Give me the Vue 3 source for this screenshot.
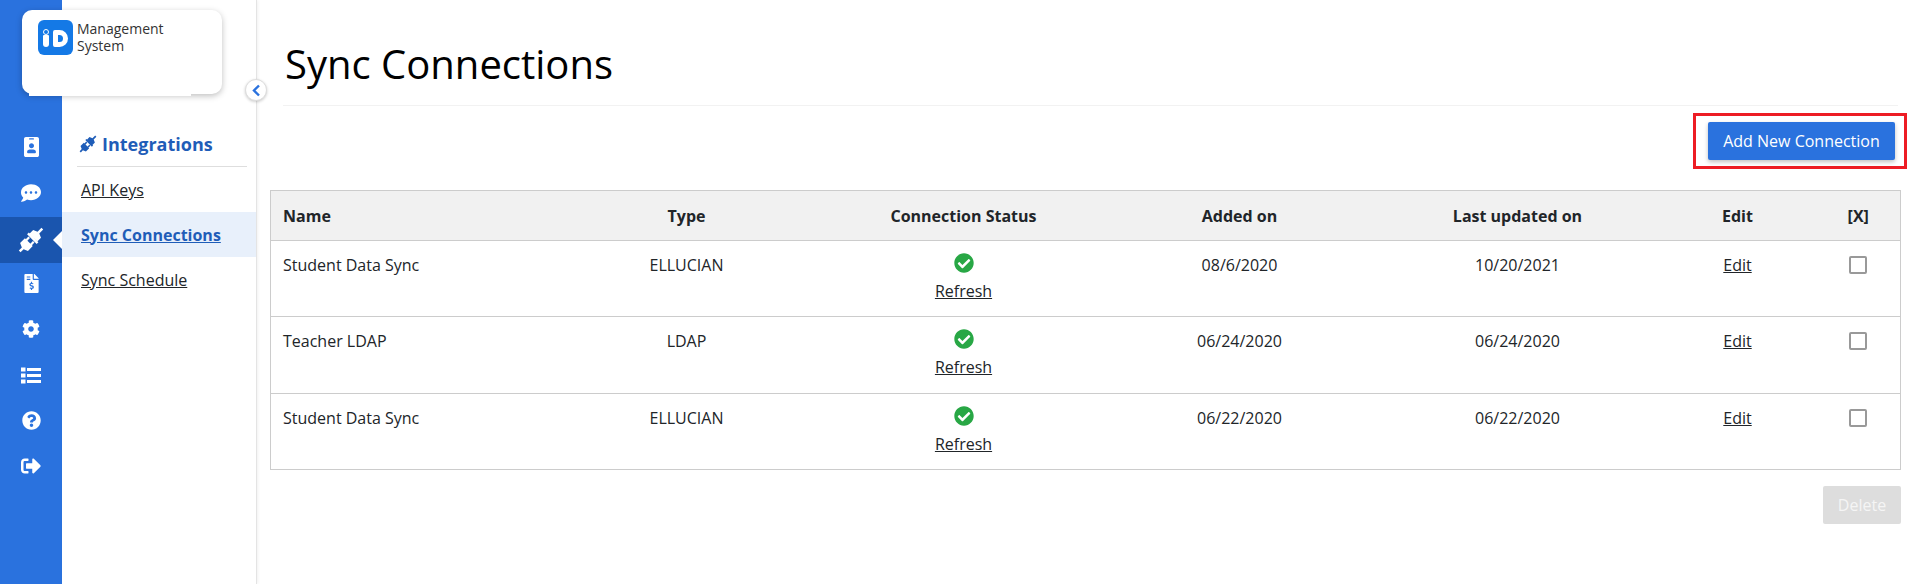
<script setup>
const railItems = [
  { name: 'badge', w: 17, h: 20, box: '0 0 384 512', d: 'M336 0H48C21.5 0 0 21.5 0 48v416c0 26.5 21.5 48 48 48h288c26.5 0 48-21.5 48-48V48c0-26.500-21.500-48-48-48zM144 32h96c8.800 0 16 7.200 16 16s-7.200 16-16 16h-96c-8.800 0-16-7.200-16-16s7.200-16 16-16zm48 128c35.300 0 64 28.700 64 64s-28.700 64-64 64-64-28.700-64-64 28.700-64 64-64zm112 236c0 10.600-10 19-22.400 19H102.400C90 415 80 406.600 80 396v-19c0-31.500 30.100-57 67.200-57h89.600c37.100 0 67.200 25.500 67.200 57z' },
  { name: 'chat', w: 20, h: 20, box: '0 0 512 512', shift: 1, d: 'M256 32C114.600 32 0 125.100 0 240c0 49.600 21.400 95 57 130.700C44.500 421.100 2.700 466 2.200 466.500c-2.200 2.300-2.800 5.700-1.500 8.700S4.800 480 8 480c66.300 0 116-31.800 146.600-56.800 33 12.900 65.600 16.800 101.400 16.800 141.400 0 256-93.100 256-208S397.400 32 256 32zM128 272c-17.700 0-32-14.300-32-32s14.300-32 32-32 32 14.300 32 32-14.300 32-32 32zm128 0c-17.700 0-32-14.300-32-32s14.300-32 32-32 32 14.300 32 32-14.300 32-32 32zm128 0c-17.700 0-32-14.300-32-32s14.300-32 32-32 32 14.300 32 32-14.300 32-32 32z' },
  { name: 'plug', active: true },
  { name: 'invoice', w: 15, h: 19, box: '0 0 384 512', d: 'M377 105L279 7c-4.500-4.500-10.600-7-17-7h-6v128h128v-6.100c0-6.300-2.500-12.400-7-16.900zM224 136V0H24C10.700 0 0 10.700 0 24v464c0 13.300 10.700 24 24 24h336c13.300 0 24-10.700 24-24V160H248c-13.200 0-24-10.800-24-24zM64 72c0-4.400 3.600-8 8-8h80c4.400 0 8 3.600 8 8v16c0 4.400-3.600 8-8 8H72c-4.400 0-8-3.600-8-8zm0 64c0-4.400 3.600-8 8-8h80c4.400 0 8 3.600 8 8v16c0 4.400-3.600 8-8 8H72c-4.400 0-8-3.600-8-8zm144 263.900V424c0 4.400-3.600 8-8 8h-16c-4.400 0-8-3.600-8-8v-24.300c-11.300-.6-22.300-4.500-31.400-11.400-3.900-2.900-4.100-8.800-.6-12.200l11.800-11.200c2.800-2.600 6.900-2.800 10.100-.8 3.900 2.400 8.300 3.700 12.800 3.700h28.100c6.500 0 11.800-5.900 11.800-13.200 0-6-3.600-11.200-8.800-12.800l-45-13.500c-18.600-5.600-31.600-23.400-31.600-43.400 0-24.500 19.100-44.400 42.700-45.100V216c0-4.400 3.600-8 8-8h16c4.400 0 8 3.600 8 8v24.300c11.300.6 22.300 4.500 31.400 11.400 3.900 2.900 4.100 8.800.6 12.200L232.600 275c-2.800 2.600-6.900 2.800-10.100.8-3.900-2.400-8.300-3.700-12.800-3.700h-28.100c-6.500 0-11.800 5.900-11.800 13.200 0 6 3.600 11.200 8.800 12.800l45 13.500c18.600 5.600 31.600 23.400 31.600 43.400 0 24.500-19 44.400-42.700 44.900z' },
  { name: 'cog', w: 18, h: 18, box: '0 0 512 512', d: 'M487.400 315.700l-42.600-24.600c4.300-23.200 4.300-47 0-70.200l42.600-24.600c4.900-2.800 7.100-8.600 5.500-14-11.100-35.600-30-67.800-54.700-94.600-3.800-4.100-10-5.100-14.800-2.300L380.800 110c-17.900-15.400-38.500-27.300-60.800-35.100V25.800c0-5.600-3.900-10.500-9.400-11.700-36.700-8.200-74.300-7.800-109.200 0-5.500 1.200-9.400 6.100-9.400 11.700V75c-22.200 7.900-42.800 19.800-60.800 35.100L88.700 85.500c-4.900-2.800-11-1.900-14.800 2.300-24.700 26.700-43.600 58.900-54.700 94.600-1.700 5.400.6 11.200 5.500 14L67.300 221c-4.300 23.200-4.300 47 0 70.200l-42.600 24.600c-4.900 2.800-7.100 8.600-5.500 14 11.100 35.600 30 67.800 54.700 94.600 3.800 4.100 10 5.100 14.800 2.300l42.600-24.600c17.900 15.400 38.500 27.300 60.800 35.100v49.200c0 5.600 3.900 10.500 9.400 11.700 36.700 8.200 74.300 7.800 109.200 0 5.500-1.200 9.400-6.100 9.400-11.700v-49.200c22.200-7.900 42.800-19.800 60.800-35.100l42.600 24.600c4.900 2.800 11 1.900 14.800-2.300 24.700-26.700 43.600-58.900 54.700-94.600 1.500-5.500-.7-11.300-5.600-14.100zM256 336c-44.100 0-80-35.900-80-80s35.900-80 80-80 80 35.900 80 80-35.900 80-80 80z' },
  { name: 'list', w: 20, h: 17, box: '0 0 20 17', shift: 1, d: 'M0 .5h4.500v4H0zM6 1h14v3H6zM0 6.500h4.500v4H0zM6 7h14v3H6zM0 12.500h4.500v4H0zM6 13h14v3H6z' },
  { name: 'help', w: 19, h: 19, box: '0 0 512 512', d: 'M504 256c0 136.997-111.043 248-248 248S8 392.997 8 256C8 119.083 119.043 8 256 8s248 111.083 248 248zM262.655 90c-54.497 0-89.255 22.957-116.549 63.758-3.536 5.286-2.353 12.415 2.715 16.258l34.699 26.310c5.205 3.947 12.621 3.008 16.665-2.122 17.864-22.658 30.113-35.797 57.303-35.797 20.429 0 45.698 13.148 45.698 32.958 0 14.976-12.363 22.667-32.534 33.976C247.128 238.528 216 254.941 216 296v4c0 6.627 5.373 12 12 12h56c6.627 0 12-5.373 12-12v-1.333c0-28.462 83.186-29.647 83.186-106.667 0-58.002-60.165-102-116.531-102zM256 338c-25.365 0-46 20.635-46 46 0 25.364 20.635 46 46 46s46-20.636 46-46c0-25.365-20.635-46-46-46z' },
  { name: 'logout', w: 20, h: 20, box: '0 0 512 512', d: 'M497 273L329 441c-15 15-41 4.500-41-17v-96H152c-13.300 0-24-10.700-24-24v-96c0-13.300 10.700-24 24-24h136V88c0-21.400 25.900-32 41-17l168 168c9.300 9.400 9.300 24.600 0 34zM192 436v-40c0-6.600-5.400-12-12-12H96c-17.700 0-32-14.300-32-32V160c0-17.700 14.300-32 32-32h84c6.600 0 12-5.400 12-12V76c0-6.600-5.400-12-12-12H96c-53 0-96 43-96 96v192c0 53 43 96 96 96h84c6.600 0 12-5.400 12-12z' }
]

const plugPath = 'M0 12h3.500l1.500-3.500h5.500v9H5L3.500 14H0zM10.500 9.500h3v1.800h-3zM10.500 14.700h3v1.800h-3zM14 7.500h2v11h-2zM16 8.500h4l1.500 3.500H26v2h-4.500L20 17.500h-4z'

const subLinks = [
  { label: 'API Keys' },
  { label: 'Sync Connections', active: true },
  { label: 'Sync Schedule' }
]

const connections = [
  { name: 'Student Data Sync', type: 'ELLUCIAN', added: '08/6/2020', updated: '10/20/2021' },
  { name: 'Teacher LDAP', type: 'LDAP', added: '06/24/2020', updated: '06/24/2020' },
  { name: 'Student Data Sync', type: 'ELLUCIAN', added: '06/22/2020', updated: '06/22/2020' }
]
</script>

<template>
  <div class="page">
    <aside class="rail">
      <div
        v-for="item in railItems"
        :key="item.name"
        class="rail-item"
        :class="{ active: item.active, nudge: item.shift }"
      >
        <svg v-if="item.name === 'plug'" width="32" height="32" viewBox="0 0 26 26">
          <path :d="plugPath" fill="#fff" transform="rotate(-45 13 13)" />
        </svg>
        <svg v-else :width="item.w" :height="item.h" :viewBox="item.box" fill="#fff">
          <path :d="item.d" fill-rule="evenodd" />
        </svg>
      </div>
    </aside>

    <nav class="subnav">
      <h2 class="subnav-title">
        <svg width="22" height="22" viewBox="0 0 26 26">
          <path :d="plugPath" fill="#1f5db8" transform="rotate(-45 13 13)" />
        </svg>
        Integrations
      </h2>
      <a
        v-for="link in subLinks"
        :key="link.label"
        class="subnav-link"
        :class="{ active: link.active }"
        href="#"
      >{{ link.label }}</a>
    </nav>

    <div class="logo-card">
      <div class="logo-mark">
        <span class="logo-i"></span>
        <span class="logo-d"></span>
      </div>
      <div class="logo-text">Management<br />System</div>
    </div>

    <button class="collapse" type="button" aria-label="Collapse">
      <svg width="10" height="13" viewBox="0 0 10 13" fill="none">
        <path d="M8 1.500 3 6.500l5 5" stroke="#2a72de" stroke-width="2.400" />
      </svg>
    </button>

    <main class="main">
      <h1 class="title">Sync Connections</h1>

      <div class="actions">
        <div class="highlight">
          <button class="btn-primary" type="button">Add New Connection</button>
        </div>
      </div>

      <table class="grid">
        <colgroup>
          <col style="width: 282px" />
          <col style="width: 268px" />
          <col style="width: 286px" />
          <col style="width: 266px" />
          <col style="width: 290px" />
          <col style="width: 150px" />
          <col />
        </colgroup>
        <thead>
          <tr>
            <th class="left">Name</th>
            <th>Type</th>
            <th>Connection Status</th>
            <th>Added on</th>
            <th>Last updated on</th>
            <th>Edit</th>
            <th class="pick">[X]</th>
          </tr>
        </thead>
        <tbody>
          <tr v-for="(row, i) in connections" :key="i">
            <td class="left">{{ row.name }}</td>
            <td>{{ row.type }}</td>
            <td class="status">
              <svg class="check" width="20" height="20" viewBox="0 0 512 512" fill="#28a745">
                <path d="M504 256c0 136.967-111.033 248-248 248S8 392.967 8 256 119.033 8 256 8s248 111.033 248 248zM227.314 387.314l184-184c6.248-6.248 6.248-16.379 0-22.627l-22.627-22.627c-6.248-6.249-16.379-6.249-22.628 0L216 308.118l-70.059-70.059c-6.248-6.248-16.379-6.248-22.628 0l-22.627 22.627c-6.248 6.248-6.248 16.379 0 22.627l104 104c6.249 6.250 16.379 6.250 22.628.001z" />
              </svg>
              <a href="#">Refresh</a>
            </td>
            <td>{{ row.added }}</td>
            <td>{{ row.updated }}</td>
            <td><a href="#">Edit</a></td>
            <td class="pick"><span class="box"></span></td>
          </tr>
        </tbody>
      </table>

      <div class="footer">
        <button class="btn-delete" type="button" disabled>Delete</button>
      </div>
    </main>
  </div>
</template>

<style>
html,
body {
  margin: 0;
  background: #fff;
}
</style>

<style scoped>
.page {
  position: relative;
  display: flex;
  height: 584px;
  overflow: hidden;
  font-family: "Open Sans", "Liberation Sans", sans-serif;
  font-size: 16px;
  color: #212529;
}

.rail {
  flex: 0 0 62px;
  box-sizing: border-box;
  padding-top: 124px;
  background: #2a72de;
}

.rail-item {
  position: relative;
  display: flex;
  align-items: center;
  justify-content: center;
  height: 45.5px;
}

.rail-item.nudge svg {
  margin-top: 2px;
}

.rail-item.active {
  height: 46px;
  margin-top: 2px;
  background: #1a55ae;
}

.rail-item.active + .rail-item {
  margin-top: -2px;
}

.rail-item.active::after {
  content: '';
  position: absolute;
  right: 0;
  top: 14px;
  border: 9px solid transparent;
  border-left: 0;
  border-right-color: #fff;
}

.subnav {
  flex: 0 0 195px;
  box-sizing: border-box;
  padding-top: 128px;
  border-right: 1px solid #e4e4e4;
  box-shadow: 1px 0 3px rgba(0, 0, 0, 0.06);
}

.subnav-title {
  display: flex;
  align-items: center;
  gap: 3px;
  margin: 0 9px 0 15px;
  padding-bottom: 6px;
  border-bottom: 1px solid #dedede;
  font-size: 18px;
  line-height: 32px;
  font-weight: 700;
  color: #1f5db8;
}

.subnav-link {
  display: flex;
  align-items: center;
  height: 45px;
  padding-left: 19px;
  color: #212529;
  text-decoration: underline;
}

.subnav-link.active {
  font-weight: 700;
  color: #1f5db8;
  background: #e8f0fb;
}

.logo-card {
  position: absolute;
  left: 22px;
  top: 10px;
  display: flex;
  gap: 4px;
  box-sizing: border-box;
  width: 200px;
  height: 84px;
  padding: 10px 16px;
  background: #fff;
  border-radius: 10px;
  box-shadow: 0 2px 6px rgba(0, 0, 0, 0.25);
}

.logo-card::after {
  content: '';
  position: absolute;
  left: 7px;
  top: 82px;
  width: 162px;
  height: 4px;
  background: #fff;
}

.logo-mark {
  position: relative;
  flex: 0 0 35px;
  height: 35px;
  background: #1479e6;
  border-radius: 6px;
}

.logo-i {
  position: absolute;
  left: 5px;
  top: 15px;
  width: 6px;
  height: 12px;
  background: #fff;
  border-radius: 1px 1px 3px 3px;
}

.logo-i::before {
  content: '';
  position: absolute;
  left: 0;
  top: -6px;
  box-sizing: border-box;
  width: 6px;
  height: 6px;
  border: 1.500px solid #fff;
  border-radius: 50%;
}

.logo-d {
  position: absolute;
  left: 15px;
  top: 10px;
  width: 15px;
  height: 17px;
  box-sizing: border-box;
  border: 5px solid #fff;
  border-radius: 2px 9px 9px 2px;
}

.logo-text {
  font-size: 14px;
  line-height: 17px;
  color: #333;
}

.collapse {
  position: absolute;
  left: 245px;
  top: 79px;
  display: flex;
  align-items: center;
  justify-content: center;
  width: 22px;
  height: 22px;
  padding: 0;
  background: #fff;
  border: 1px solid #ddd;
  border-radius: 50%;
  box-shadow: 0 1px 3px rgba(0, 0, 0, 0.2);
}

.main {
  flex: 1;
  min-width: 0;
  box-sizing: border-box;
  padding: 0 13px;
}

.title {
  margin: 0 3px 0 13px;
  padding: 38px 0 15px 2px;
  border-bottom: 1px solid #f2f2f2;
  font-size: 40px;
  line-height: 52px;
  font-weight: 400;
  color: #000;
}

.actions {
  display: flex;
  justify-content: flex-end;
  margin: 7px -6px 21px 0;
}

.highlight {
  padding: 6px 9px 6px 12px;
  border: 3px solid #ed1c24;
}

.btn-primary {
  display: block;
  width: 187px;
  height: 38px;
  padding: 0;
  color: #fff;
  background: #2a72de;
  border: 0;
  border-radius: 2px;
  box-shadow: 0 2px 4px rgba(0, 0, 0, 0.25);
  font: inherit;
}

.grid {
  width: 100%;
  table-layout: fixed;
  border-collapse: collapse;
  border: 1px solid #ccc;
}

.grid th {
  height: 49px;
  padding: 0;
  background: #f1f1f1;
  border-bottom: 1px solid #ccc;
  font-weight: 700;
  text-align: center;
}

.grid td {
  height: 76px;
  box-sizing: border-box;
  padding: 13px 0 0;
  border-bottom: 1px solid #ccc;
  text-align: center;
  vertical-align: top;
}

.grid tbody tr:nth-child(2) td {
  height: 77px;
}

.grid .left {
  padding-left: 12px;
  text-align: left;
}

.grid .pick {
  padding-left: 4px;
}

.grid a {
  color: #212529;
}

.grid .status {
  padding-top: 12px;
  line-height: 25px;
}

.check {
  display: block;
  margin: 0 auto 6px;
}

.box {
  display: inline-block;
  box-sizing: border-box;
  width: 18px;
  height: 18px;
  margin-top: 2px;
  border: 2px solid #999;
  border-radius: 2px;
}

.footer {
  display: flex;
  justify-content: flex-end;
  margin-top: 16px;
}

.btn-delete {
  width: 78px;
  height: 38px;
  padding: 0;
  color: #f5f5f5;
  background: #ddd;
  border: 0;
  border-radius: 2px;
  font: inherit;
}
</style>
